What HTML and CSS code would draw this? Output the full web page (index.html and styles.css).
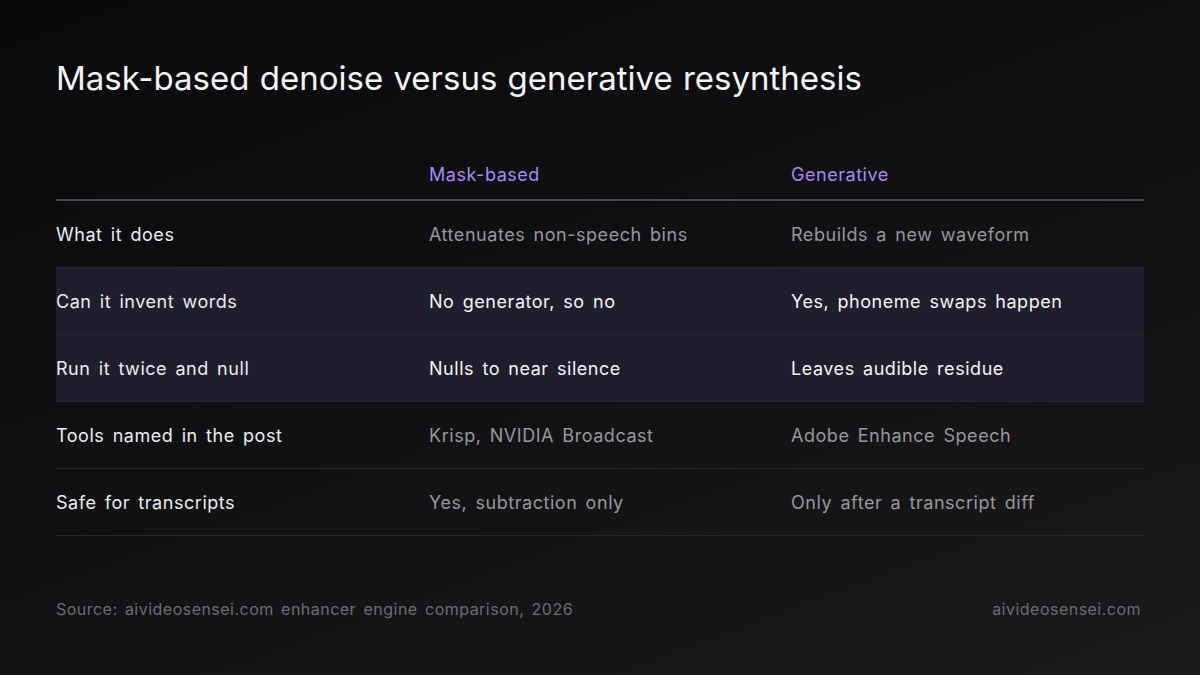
FILE: index.html
```html
<!DOCTYPE html>
<html lang="en">

<head>
    <meta charset="UTF-8">
    <meta name="viewport" content="width=device-width, initial-scale=1.0">
    <title>Mask-based vs generative</title>
    <link rel="stylesheet" href="styles.css">
</head>

<body>
    <div class="slide">
        <h1 class="title">Mask-based denoise versus generative resynthesis</h1>

        <div class="compare">
            <div class="row head">
                <div class="cell"></div>
                <div class="cell">Mask-based</div>
                <div class="cell">Generative</div>
            </div>
            <div class="row">
                <div class="cell label">What it does</div>
                <div class="cell">Attenuates non-speech bins</div>
                <div class="cell">Rebuilds a new waveform</div>
            </div>
            <div class="row hot">
                <div class="cell label">Can it invent words</div>
                <div class="cell">No generator, so no</div>
                <div class="cell">Yes, phoneme swaps happen</div>
            </div>
            <div class="row hot">
                <div class="cell label">Run it twice and null</div>
                <div class="cell">Nulls to near silence</div>
                <div class="cell">Leaves audible residue</div>
            </div>
            <div class="row">
                <div class="cell label">Tools named in the post</div>
                <div class="cell">Krisp, NVIDIA Broadcast</div>
                <div class="cell">Adobe Enhance Speech</div>
            </div>
            <div class="row">
                <div class="cell label">Safe for transcripts</div>
                <div class="cell">Yes, subtraction only</div>
                <div class="cell">Only after a transcript diff</div>
            </div>
        </div>

        <div class="footer">
            <span>Source: aivideosensei.com enhancer engine comparison, 2026</span>
            <span>aivideosensei.com</span>
        </div>
    </div>
</body>

</html>
```

FILE: styles.css
```css
* {
    margin: 0;
    padding: 0;
    box-sizing: border-box;
}

body {
    width: 1200px;
    height: 675px;
    overflow: hidden;
    background: linear-gradient(160deg, #0a0a0c 0%, #111114 50%, #1a1a1d 100%);
    font-family: 'Inter', 'Noto Sans', sans-serif;
    color: #ececef;
}

.slide {
    height: 100%;
    padding: 58px 56px 0 56px;
    display: flex;
    flex-direction: column;
}

.title {
    font-size: 33px;
    font-weight: 400;
    line-height: 40px;
    color: #f4f4f6;
    word-spacing: 1px;
}

.compare {
    margin-top: 53px;
}

.row {
    display: grid;
    grid-template-columns: 373px 362px 1fr;
    height: 67px;
    align-items: center;
    border-bottom: 1px solid #26262b;
    font-size: 18px;
    letter-spacing: 0.03em;
    word-spacing: 0.15em;
    color: #97979c;
}

.row .label {
    color: #ececef;
}

.row.head {
    height: 50px;
    align-items: start;
    padding-top: 13px;
    border-bottom: 2px solid #46464c;
    color: #a58af5;
}

.row.hot {
    background-color: #1f1e2d;
    color: #f4f4f6;
}

.footer {
    margin-top: 63px;
    display: flex;
    justify-content: space-between;
    padding-right: 3px;
    font-size: 16px;
    letter-spacing: 0.03em;
    word-spacing: 0.15em;
    color: #6c6c72;
}
```
